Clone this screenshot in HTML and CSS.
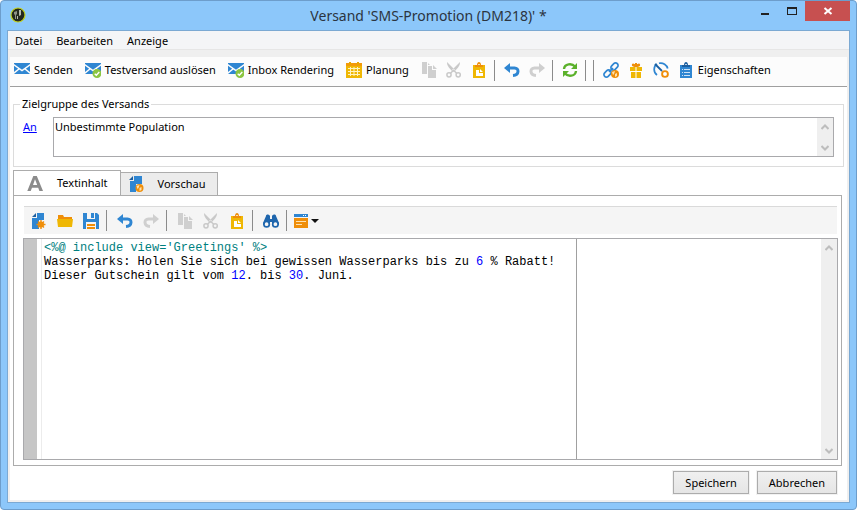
FILE: index.html
```html
<!DOCTYPE html>
<html lang="de">
<head>
<meta charset="utf-8">
<title>Versand 'SMS-Promotion (DM218)' *</title>
<meta name="viewport" content="width=device-width, initial-scale=1">
<link rel="stylesheet" href="styles.css">
</head>
<body>
<svg class="sprite" aria-hidden="true">
  <symbol id="mail" viewBox="0 0 16 16"><path fill="#2f86d2" d="M0 1h16v11H0z"/><path fill="none" stroke="#fcfcfc" stroke-width="1.5" d="M-.5 2.5 8 8.5l8.500-6M-.5 11.500 5.500 6.500M16.500 11.500l-6-5"/></symbol>
  <symbol id="mail-check" viewBox="0 0 16 16"><path fill="#2f86d2" d="M0 1h16v11H0z"/><path fill="none" stroke="#fcfcfc" stroke-width="1.5" d="M-.5 2.500 8 8.500l8.500-6M-.5 11.500 5.500 6.500M16.500 11.500l-6-5"/><circle cx="12" cy="11.500" r="4.500" fill="#8bc540"/><path fill="none" stroke="#fff" stroke-width="1.400" d="m9.700 11.700 1.600 1.500 3-3.200"/></symbol>
  <symbol id="calendar" viewBox="0 0 16 16"><path fill="#efb704" d="M0 2h16v14H0z"/><path fill="#f39a0a" d="M0 1h16v3H0z"/><path fill="#e8a500" d="M3 0h2v3H3zM11 0h2v3h-2z"/><path stroke="#fff3c0" fill="none" d="M2 6.500h12M2 9.500h12M2 12.500h12M4.500 5v9M8 5v9M11.500 5v9"/></symbol>
  <symbol id="copy" viewBox="0 0 16 16"><path fill="#cfcfcf" d="M1 0h5v12H1zM7 4h4v4h4v8H7z"/><path fill="#cfcfcf" d="m12 3 4 4h-4zM7 1l2 2H7z"/></symbol>
  <symbol id="cut" viewBox="0 0 16 16"><path fill="#c9c9c9" d="M1 0c0 3 1 5 6 10l2-2zM14 0c0 3-1 5-6 10L6 8z"/><g fill="none" stroke="#c9c9c9" stroke-width="1.500"><circle cx="3" cy="12.800" r="2.100"/><circle cx="12.200" cy="12.800" r="2.100"/><path d="m4.500 11.300 3-3 3.200 3"/></g></symbol>
  <symbol id="paste" viewBox="0 0 16 16"><path fill="#efb704" d="M2 3h12v13H2z"/><path fill="#ef8e09" d="M4 3h2c0-4 4-4 4 0h2v2H4z"/><path fill="#fff" d="M7.300 2h1.400v1H7.300zM5 8h3v3h4v3H5zM9 7l3 3H9z"/></symbol>
  <symbol id="undo" viewBox="0 0 16 16"><path fill="none" stroke="#2f86d2" stroke-width="3" d="M4 6h6.500c4.800 0 5 7-1.500 7.500"/><path fill="#2f86d2" d="M6 1v10L0 6z"/></symbol>
  <symbol id="redo" viewBox="0 0 16 16"><path fill="none" stroke="#cfcfcf" stroke-width="3" d="M12 6H5.500c-4.800 0-5 7 1.500 7.500"/><path fill="#cfcfcf" d="M10 1v10l6-5z"/></symbol>
  <symbol id="refresh" viewBox="0 0 16 16"><g fill="none" stroke="#5bb12b" stroke-width="2.400"><path d="M2 7c.500-5.500 8-6 11-2.500M14 9c-.500 5.500-8 6-11 2.500"/></g><path fill="#5bb12b" d="M15 1v6H9zM1 15V9h6z"/></symbol>
  <symbol id="link" viewBox="0 0 16 16"><g fill="none" stroke="#2f86d2" stroke-width="1.700"><rect x="-4" y="-2.500" width="8" height="5" rx="2.500" transform="translate(11.500 4.500) rotate(-45)"/><rect x="-4" y="-2.500" width="8" height="5" rx="2.500" transform="translate(4.500 11.500) rotate(-45)"/><path d="m6 10 4-4"/></g><circle cx="12" cy="12" r="4" fill="#ef8e09"/><path fill="#ffe2b0" d="m9 10 3-1-1 3-1 1zM12 12l2-1v3l-2 1z"/></symbol>
  <symbol id="gift" viewBox="0 0 16 16"><path fill="#efb704" d="M2 5h12v4H2zM3 10h10v6H3z"/><path fill="none" stroke="#ef8e09" stroke-width="1.600" d="M8 4C3 5 4 0 8 4c4-4 5 1 0 0z"/><path fill="#ef8e09" d="M7 1h2v3H7z"/><path fill="#fff" d="M7.500 5h1v11h-1zM3 9h10v1H3z"/></symbol>
  <symbol id="gauge" viewBox="0 0 16 16"><path fill="none" stroke="#2f86d2" stroke-width="1.700" d="M4 13C0 10 .500 4 4 2M6 1.300c4-1 8 1.700 8.700 5.200"/><path stroke="#1c5fa0" stroke-width="1.800" d="m2 2 7 7"/><circle cx="12" cy="12" r="2.900" fill="#fff" stroke="#ef8e09" stroke-width="1.900"/></symbol>
  <symbol id="clipboard" viewBox="0 0 16 16"><path fill="#2f86d2" d="M2 3h12v13H2z"/><path fill="#1c5fa0" d="M4 3h2c0-4 4-4 4 0h2v2H4z"/><path fill="#fff" d="M7.300 2h1.400v1H7.300z"/><path stroke="#cde2f6" fill="none" d="M4 7.500h1M6 7.500h6M4 10.500h1M6 10.500h6M4 13.500h1M6 13.500h6"/></symbol>
  <symbol id="new" viewBox="0 0 16 16"><path fill="#2f86d2" d="M6 0h7v7H8v9H1V5h5z"/><path fill="#1c5fa0" d="M5 0v4H1z"/><g stroke="#ef8e09" stroke-width="1.400"><path d="M10 7v9M5.500 11.500h9M7 8.500l6 6M13 8.500l-6 6"/></g><circle cx="10" cy="11.500" r="3" fill="#ef8e09"/></symbol>
  <symbol id="preview" viewBox="0 0 16 16"><path fill="#2f86d2" d="M6 0h8v8H8v8H2V5h4z"/><path fill="#1c5fa0" d="M5 0v4H1z"/><circle cx="11.500" cy="12" r="4" fill="#ef8e09"/><path fill="#ffe2b0" d="m8.500 10 3-1-1 3-1 1zM11.500 12l2-1v3l-2 1z"/></symbol>
  <symbol id="open" viewBox="0 0 16 16"><path fill="#ef8e09" d="M1 2h5l1 2h8v3H1z"/><path fill="#efb704" d="M0 6h16l-1 8H1z"/></symbol>
  <symbol id="save" viewBox="0 0 16 16"><path fill="#2f86d2" d="M0 0h14l2 2v14H0z"/><path fill="#f5f5f5" d="M4 0h8v6H4z"/><path fill="#2f86d2" d="M8 0h3v5H8z"/><path fill="#f5f5f5" d="M3 9h10v7H3z"/><path stroke="#ef8e09" fill="none" stroke-width="2" d="M4 12h8M4 15h8"/></symbol>
  <symbol id="find" viewBox="0 0 16 16"><path fill="#1f66ad" d="M3 3c0-2 3-2 4 0v3h2V3c1-2 4-2 4 0l3 7v2H9V9H7v3H0v-2z"/><circle cx="3.600" cy="11.200" r="2.700" fill="#f5f5f5" stroke="#1f66ad" stroke-width="1.700"/><circle cx="12.400" cy="11.200" r="2.700" fill="#f5f5f5" stroke="#1f66ad" stroke-width="1.700"/></symbol>
  <symbol id="form" viewBox="0 0 16 16"><path fill="#2f86d2" d="M0 1h14v3H0z"/><path fill="#fff" d="M9 2h1v1H9zM11 2h1v1h-1z"/><path fill="#ef8e09" d="M0 5h14v10H0z"/><path stroke="#ffe2b0" fill="none" d="M2 8.500h10M2 11.500h6"/></symbol>
  <symbol id="up" viewBox="0 0 8 8"><path fill="none" stroke="#bdbdbd" stroke-width="2" d="m.500 6 3.500-3.500L7.500 6"/></symbol>
  <symbol id="down" viewBox="0 0 8 8"><path fill="none" stroke="#bdbdbd" stroke-width="2" d="m.500 2 3.500 3.500L7.500 2"/></symbol>
</svg>

<div class="window">
  <header class="titlebar">
    <svg class="logo" viewBox="0 0 16 16" aria-hidden="true"><circle cx="8" cy="8" r="7" fill="#25281f" stroke="#c3d21c" stroke-width="1.200"/><path fill="#8f9284" d="M4 5l3-1v3l-1 1v4H5V8L4 7z"/><path fill="#b9bbae" d="M9 3h2v5l-2 1zM7 9h1v3H7z"/></svg>
    <h1 class="title">Versand 'SMS-Promotion (DM218)' *</h1>
    <div class="caption">
      <button class="cap" aria-label="Minimieren"><svg viewBox="0 0 10 10"><path fill="#222" d="M1 7h8v2H1z"/></svg></button>
      <button class="cap" aria-label="Maximieren"><svg viewBox="0 0 10 10"><path fill="#222" fill-rule="evenodd" d="M0 1h10v8H0zM1 3v5h8V3z"/></svg></button>
      <button class="cap cap-close" aria-label="Schließen"><svg viewBox="0 0 10 10"><path stroke="#fff" stroke-width="2" d="m1.500 2 7 6M8.500 2l-7 6"/></svg></button>
    </div>
  </header>

  <div class="client">
    <nav class="menu">
      <button class="menu-item">Datei</button>
      <button class="menu-item">Bearbeiten</button>
      <button class="menu-item">Anzeige</button>
    </nav>

    <div class="page">
      <div class="toolbar main-tools" role="toolbar" aria-label="Versand">
        <button class="tool labelled"><svg><use href="#mail"/></svg>Senden</button>
        <button class="tool labelled"><svg><use href="#mail-check"/></svg>Testversand auslösen</button>
        <button class="tool labelled"><svg><use href="#mail-check"/></svg>Inbox Rendering</button>
        <button class="tool labelled"><svg><use href="#calendar"/></svg>Planung</button>
        <button class="tool" aria-label="Kopieren"><svg><use href="#copy"/></svg></button>
        <button class="tool" aria-label="Ausschneiden"><svg><use href="#cut"/></svg></button>
        <button class="tool" aria-label="Einfügen"><svg><use href="#paste"/></svg></button>
        <span class="sep"></span>
        <button class="tool" aria-label="Rückgängig"><svg><use href="#undo"/></svg></button>
        <button class="tool" aria-label="Wiederholen"><svg><use href="#redo"/></svg></button>
        <span class="sep"></span>
        <button class="tool" aria-label="Aktualisieren"><svg><use href="#refresh"/></svg></button>
        <span class="sep"></span>
        <span class="sep"></span>
        <button class="tool" aria-label="Verknüpfung"><svg><use href="#link"/></svg></button>
        <button class="tool" aria-label="Angebote"><svg><use href="#gift"/></svg></button>
        <button class="tool" aria-label="Leistung"><svg><use href="#gauge"/></svg></button>
        <button class="tool labelled"><svg><use href="#clipboard"/></svg>Eigenschaften</button>
      </div>

      <fieldset class="target">
        <legend>Zielgruppe des Versands</legend>
        <div class="target-row">
          <a href="#to" id="to-label">An</a>
          <div class="box">
            <textarea id="to" class="target-text" aria-labelledby="to-label" readonly>Unbestimmte Population</textarea>
            <div class="scroll">
              <button aria-label="Nach oben"><svg><use href="#up"/></svg></button>
              <button aria-label="Nach unten"><svg><use href="#down"/></svg></button>
            </div>
          </div>
        </div>
      </fieldset>

      <div class="tabs" role="tablist">
        <button class="tab active" role="tab" aria-selected="true"><svg viewBox="0 0 16 16"><path fill="#8c8c8c" fill-rule="evenodd" d="M6.300 1h3.500L16 16h-3.600l-1.200-3.300H5L3.700 16H.300zM8 4.200 6 10h4.200z"/></svg>Textinhalt</button>
        <button class="tab" role="tab" aria-selected="false"><svg><use href="#preview"/></svg>Vorschau</button>
      </div>

      <section class="panel" role="tabpanel">
        <div class="toolbar edit-tools" role="toolbar" aria-label="Editor">
          <button class="tool" aria-label="Neu"><svg><use href="#new"/></svg></button>
          <button class="tool" aria-label="Öffnen"><svg><use href="#open"/></svg></button>
          <button class="tool" aria-label="Sichern"><svg><use href="#save"/></svg></button>
          <span class="sep"></span>
          <button class="tool" aria-label="Rückgängig"><svg><use href="#undo"/></svg></button>
          <button class="tool" aria-label="Wiederholen"><svg><use href="#redo"/></svg></button>
          <span class="sep"></span>
          <button class="tool" aria-label="Kopieren"><svg><use href="#copy"/></svg></button>
          <button class="tool" aria-label="Ausschneiden"><svg><use href="#cut"/></svg></button>
          <button class="tool" aria-label="Einfügen"><svg><use href="#paste"/></svg></button>
          <span class="sep"></span>
          <button class="tool" aria-label="Suchen"><svg><use href="#find"/></svg></button>
          <span class="sep"></span>
          <button class="tool drop" aria-label="Feld einfügen"><svg><use href="#form"/></svg><span class="caret"></span></button>
        </div>
        <div class="box editor">
          <div class="gutter"></div>
          <div class="code" contenteditable="true" spellcheck="false" role="textbox" aria-multiline="true" aria-label="Textinhalt">
            <div class="line"><span class="tag">&lt;%@ include view='Greetings' %&gt;</span></div>
            <div class="line"><span>Wasserparks: Holen Sie sich bei gewissen Wasserparks bis zu </span><span class="num">6</span><span> % Rabatt!</span></div>
            <div class="line"><span>Dieser Gutschein gilt vom </span><span class="num">12</span><span>. bis </span><span class="num">30</span><span>. Juni.</span></div>
          </div>
          <div class="margin"></div>
          <div class="scroll">
            <button aria-label="Nach oben"><svg><use href="#up"/></svg></button>
            <button aria-label="Nach unten"><svg><use href="#down"/></svg></button>
          </div>
        </div>
      </section>

      <footer class="actions">
        <button class="btn">Speichern</button>
        <button class="btn">Abbrechen</button>
      </footer>
    </div>
  </div>
</div>
</body>
</html>
```
FILE: styles.css
```css
* { box-sizing: border-box; }

body {
  margin: 0;
  min-height: 100vh;
  display: flex;
  padding: 0 1px 8px 0;
  background: #fff;
  color: #000;
  font: 11px/16px "Noto Sans", "Open Sans", sans-serif;
}

button {
  margin: 0;
  padding: 0;
  border: 0;
  background: none;
  color: inherit;
  font: inherit;
  white-space: nowrap;
}

svg { display: block; flex: none; }
.sprite { position: absolute; width: 0; height: 0; }

.window {
  flex: 1;
  min-width: 0;
  display: flex;
  flex-direction: column;
  padding: 0 6px 6px;
  border: 1px solid #6d9dcb;
  border-radius: 4px;
  background: #8cc7fa;
}

.titlebar {
  display: grid;
  grid-template-columns: 134px 1fr 134px;
  height: 29px;
}
.logo { width: 16px; height: 16px; margin: 6px 0 0 3px; }
.title {
  margin: 0;
  color: #2b3440;
  font: 14px/29px "Noto Sans", "Open Sans", sans-serif;
  text-align: center;
  white-space: nowrap;
}
.caption { display: flex; justify-content: flex-end; align-items: flex-start; }
.cap { display: grid; place-items: center; width: 27px; height: 20px; }
.cap svg { width: 10px; height: 10px; }
.cap-close { width: 45px; background: #c75050; }

.client {
  flex: 1;
  display: flex;
  flex-direction: column;
  border: 1px solid #7ba9d3;
  background: #efefef;
}
.menu {
  display: flex;
  gap: 14px;
  height: 19px;
  padding: 0 7px;
  border-bottom: 1px solid #e6e6e6;
  background: #f4f5f7;
}
.menu-item { line-height: 20px; }

.page {
  flex: 1;
  display: flex;
  flex-direction: column;
  margin: 7px 2px 2px;
  background: #fff;
}

.toolbar { display: flex; align-items: center; }
.tool {
  display: flex;
  align-items: center;
  gap: 4px;
  height: 22px;
  padding: 0 5px 0 4px;
}
.tool svg { width: 16px; height: 16px; }
.labelled { padding-right: 8px; }
.sep { width: 1px; height: 21px; margin: 0 5px 0 2px; background: #8b8b8b; }
.main-tools {
  height: 30px;
  padding-bottom: 3px;
  border-bottom: 1px solid #9f9f9f;
  background: #fcfcfc;
}

.target {
  min-width: 0;
  margin: 9px 3px 0;
  padding: 5px 9px 9px;
  border: 1px solid #dcdcdc;
}
.target legend { margin-left: -3px; padding: 0 2px; }
.target-row { display: grid; grid-template-columns: 30px 1fr; }
.target-row a { line-height: 20px; color: #00f; }

.box { display: flex; min-width: 0; border: 1px solid #a9a9ac; background: #fff; }
.target-text {
  flex: 1;
  min-width: 0;
  height: 38px;
  padding: 1px 1px;
  border: 0;
  outline: 0;
  resize: none;
  background: none;
  color: inherit;
  font: inherit;
}
.scroll {
  display: flex;
  flex-direction: column;
  justify-content: space-between;
  width: 16px;
  background: #efefef;
}
.scroll button { display: grid; place-items: center; width: 15px; height: 17px; }
.scroll svg { width: 8px; height: 8px; }

.tabs { display: flex; align-items: flex-end; margin: 3px 3px -1px; }
.tab {
  display: flex;
  align-items: center;
  gap: 14px;
  height: 24px;
  padding: 0 12px 0 7px;
  border: 1px solid #acacac;
  border-left: 0;
  background: #ececec;
}
.tab svg { width: 16px; height: 16px; }
.tab.active {
  height: 26px;
  padding-left: 13px;
  border-left: 1px solid #acacac;
  border-bottom-color: #fff;
  background: #fff;
}

.panel {
  flex: 1;
  display: flex;
  flex-direction: column;
  gap: 4px;
  margin: 0 5px 0 3px;
  padding: 10px 3px 5px 9px;
  border: 1px solid #acacac;
}
.edit-tools {
  height: 28px;
  margin: 0 1px;
  padding-left: 2px;
  border-top: 1px solid #dadada;
  background: #f5f5f5;
}
.edit-tools .tool { padding: 0 5px; }
.edit-tools .drop { gap: 1px; padding-left: 2px; }
.caret { border: 4px solid transparent; border-top-color: #111; border-bottom: 0; }

.editor { flex: 1; }
.gutter { width: 18px; border-left: 13px solid #c6c6c6; border-right: 1px solid #ececec; }
.code {
  flex: 0 0 534px;
  padding: 2px;
  outline: 0;
  font: 12px/14px "Liberation Mono", monospace;
}
.line { white-space: pre; }
.tag { color: #008080; }
.num { color: #00f; }
.margin { flex: 1; border-left: 1px solid #a0a0a0; }

.actions { display: flex; justify-content: flex-end; gap: 8px; padding: 5px 10px 6px; }
.btn {
  height: 23px;
  padding: 0 11px;
  border: 1px solid #acacac;
  outline: 1px solid #f2f2f2;
  background: linear-gradient(#f0f0f0, #e5e5e5);
}
```
